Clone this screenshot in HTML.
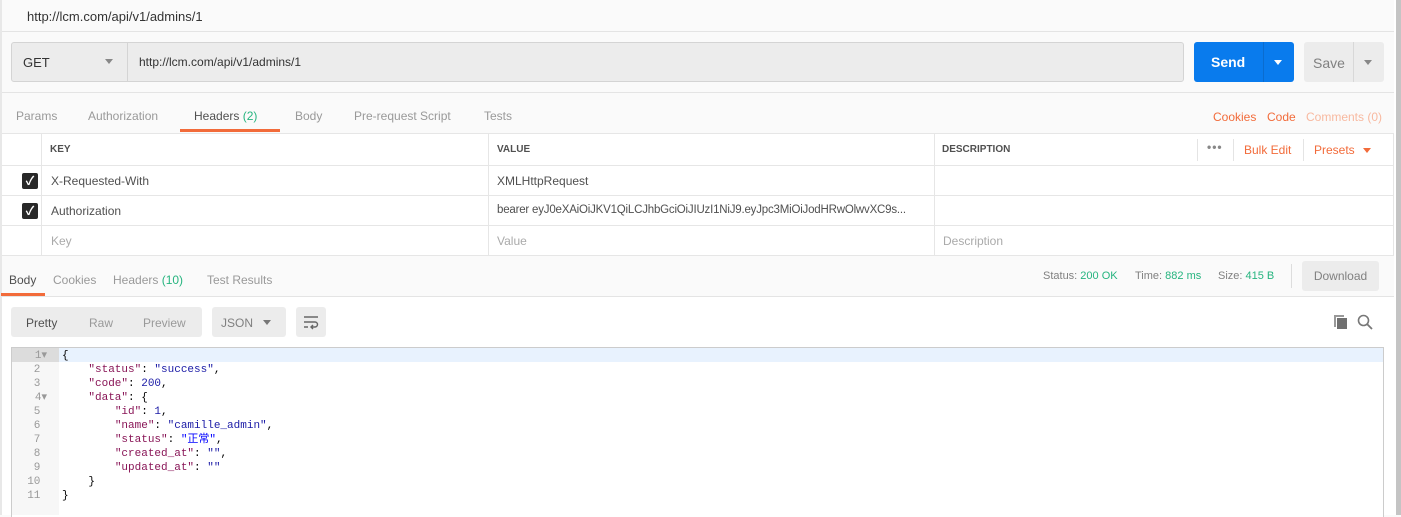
<!DOCTYPE html>
<html><head><meta charset="utf-8"><style>
*{box-sizing:border-box;margin:0;padding:0}
body{width:1401px;height:515px;overflow:hidden;background:#fafafa;font-family:"Liberation Sans","Noto Sans CJK SC",sans-serif;font-size:12px;color:#505050;position:relative}
.a{position:absolute}
.g{color:#999}
.o{color:#f26b3a}
.t{position:absolute;top:109px;font-size:12px;color:#999}
.cell{position:absolute;background:#fff;border:1px solid #e4e4e4}
.cb{position:absolute;left:22px;width:16px;height:16px;background:#282828;border-radius:2px;color:#fff;font-size:12px;line-height:16px;text-align:center;font-weight:bold}
.code{position:absolute;left:62px;font-family:"Liberation Mono","Noto Sans CJK SC",monospace;font-size:11px;line-height:14px;white-space:pre;color:#000}
.k{color:#881456}.s{color:#1a1aa6}.n{color:#1a1aa6}
.ln{position:absolute;left:11px;width:36px;text-align:right;font-family:"Liberation Mono",monospace;font-size:11px;line-height:14px;color:#999;white-space:pre}
</style></head><body>
<div class="a" style="left:0;top:0;width:2px;height:515px;background:#e8e8e8"></div>
<div class="a" style="left:27px;top:9px;font-size:13px;color:#333">http://lcm.com/api/v1/admins/1</div>
<div class="a" style="left:2px;top:31px;width:1392px;height:1px;background:#e4e4e4"></div>
<div class="a" style="left:11px;top:42px;width:1173px;height:40px;background:#ececec;border:1px solid #d4d4d4;border-radius:3px"></div>
<div class="a" style="left:127px;top:43px;width:1px;height:38px;background:#d4d4d4"></div>
<div class="a" style="left:23px;top:55px;font-size:13px;color:#333">GET</div>
<div class="a" style="left:105px;top:59px;border-left:4px solid transparent;border-right:4px solid transparent;border-top:5px solid #888"></div>
<div class="a" style="left:139px;top:55px;font-size:12px;color:#333">http://lcm.com/api/v1/admins/1</div>
<div class="a" style="left:1194px;top:42px;width:100px;height:40px;background:#097bed;border-radius:3px"></div>
<div class="a" style="left:1263px;top:42px;width:1px;height:40px;background:#0a6ccf"></div>
<div class="a" style="left:1211px;top:54px;font-size:14px;font-weight:bold;color:#fff">Send</div>
<div class="a" style="left:1274px;top:60px;border-left:4px solid transparent;border-right:4px solid transparent;border-top:5px solid #fff"></div>
<div class="a" style="left:1304px;top:42px;width:80px;height:40px;background:#ececec;border-radius:3px"></div>
<div class="a" style="left:1353px;top:42px;width:1px;height:40px;background:#d8d8d8"></div>
<div class="a" style="left:1313px;top:55px;font-size:14px;color:#808080">Save</div>
<div class="a" style="left:1364px;top:60px;border-left:4px solid transparent;border-right:4px solid transparent;border-top:5px solid #888"></div>
<div class="a" style="left:2px;top:92px;width:1392px;height:1px;background:#e4e4e4"></div>
<div class="t" style="left:16px">Params</div>
<div class="t" style="left:88px">Authorization</div>
<div class="t" style="left:194px;color:#505050">Headers <span style="color:#26b47f">(2)</span></div>
<div class="t" style="left:295px">Body</div>
<div class="t" style="left:354px">Pre-request Script</div>
<div class="t" style="left:484px">Tests</div>
<div class="a" style="left:180px;top:129px;width:100px;height:3px;background:#f26b3a"></div>
<div class="a o" style="left:1213px;top:110px">Cookies</div>
<div class="a o" style="left:1267px;top:110px">Code</div>
<div class="a" style="left:1306px;top:110px;color:#f8b9a0">Comments (0)</div>
<div class="cell" style="left:2px;top:133px;width:1392px;height:123px;border:none;background:#e6e6e6"></div>
<div class="cell" style="left:2px;top:134px;width:39px;height:31px;border:none"></div>
<div class="cell" style="left:42px;top:134px;width:446px;height:31px;border:none"></div>
<div class="cell" style="left:489px;top:134px;width:445px;height:31px;border:none"></div>
<div class="cell" style="left:935px;top:134px;width:458px;height:31px;border:none"></div>
<div class="cell" style="left:2px;top:166px;width:39px;height:29px;border:none"></div>
<div class="cell" style="left:42px;top:166px;width:446px;height:29px;border:none"></div>
<div class="cell" style="left:489px;top:166px;width:445px;height:29px;border:none"></div>
<div class="cell" style="left:935px;top:166px;width:458px;height:29px;border:none"></div>
<div class="cell" style="left:2px;top:196px;width:39px;height:29px;border:none"></div>
<div class="cell" style="left:42px;top:196px;width:446px;height:29px;border:none"></div>
<div class="cell" style="left:489px;top:196px;width:445px;height:29px;border:none"></div>
<div class="cell" style="left:935px;top:196px;width:458px;height:29px;border:none"></div>
<div class="cell" style="left:2px;top:226px;width:39px;height:29px;border:none"></div>
<div class="cell" style="left:42px;top:226px;width:446px;height:29px;border:none"></div>
<div class="cell" style="left:489px;top:226px;width:445px;height:29px;border:none"></div>
<div class="cell" style="left:935px;top:226px;width:458px;height:29px;border:none"></div>
<div class="a" style="left:50px;top:144px;font-size:10px;font-weight:bold;color:#505050">KEY</div>
<div class="a" style="left:497px;top:144px;font-size:10px;font-weight:bold;color:#505050">VALUE</div>
<div class="a" style="left:942px;top:144px;font-size:10px;font-weight:bold;color:#505050">DESCRIPTION</div>
<div class="a" style="left:1197px;top:139px;width:1px;height:22px;background:#e4e4e4"></div>
<div class="a" style="left:1207px;top:140px;color:#888;font-size:12px;font-weight:bold;letter-spacing:1px">•••</div>
<div class="a" style="left:1233px;top:139px;width:1px;height:22px;background:#e4e4e4"></div>
<div class="a o" style="left:1244px;top:143px">Bulk Edit</div>
<div class="a" style="left:1303px;top:139px;width:1px;height:22px;background:#e4e4e4"></div>
<div class="a o" style="left:1314px;top:143px">Presets</div>
<div class="a" style="left:1363px;top:148px;border-left:4px solid transparent;border-right:4px solid transparent;border-top:5px solid #f26b3a"></div>
<div class="cb" style="top:173px">✓</div>
<div class="cb" style="top:203px">✓</div>
<div class="a" style="left:51px;top:174px">X-Requested-With</div>
<div class="a" style="left:497px;top:174px">XMLHttpRequest</div>
<div class="a" style="left:51px;top:204px">Authorization</div>
<div class="a" style="left:497px;top:204px;font-size:11.5px;letter-spacing:-0.2px;width:430px;white-space:nowrap;overflow:hidden">bearer eyJ0eXAiOiJKV1QiLCJhbGciOiJIUzI1NiJ9.eyJpc3MiOiJodHRwOlwvXC9s...</div>
<div class="a g" style="left:51px;top:234px;color:#aaa">Key</div>
<div class="a g" style="left:497px;top:234px;color:#aaa">Value</div>
<div class="a g" style="left:943px;top:234px;color:#aaa">Description</div>
<div class="a" style="left:9px;top:273px;font-size:12px;color:#505050">Body</div>
<div class="a g" style="left:53px;top:273px">Cookies</div>
<div class="a g" style="left:113px;top:273px">Headers <span style="color:#26b47f">(10)</span></div>
<div class="a g" style="left:207px;top:273px">Test Results</div>
<div class="a" style="left:1px;top:293px;width:44px;height:3px;background:#f26b3a"></div>
<div class="a" style="left:1043px;top:270px;font-size:11px;color:#808080">Status: <span style="color:#26b47f">200 OK</span></div>
<div class="a" style="left:1135px;top:270px;font-size:11px;color:#808080">Time: <span style="color:#26b47f">882 ms</span></div>
<div class="a" style="left:1218px;top:270px;font-size:11px;color:#808080">Size: <span style="color:#26b47f">415 B</span></div>
<div class="a" style="left:1291px;top:264px;width:1px;height:24px;background:#ddd"></div>
<div class="a" style="left:1302px;top:261px;width:77px;height:30px;background:#ececec;border-radius:3px;color:#808080;text-align:center;line-height:30px;font-size:12px">Download</div>
<div class="a" style="left:2px;top:296px;width:1392px;height:219px;background:#fff;border-top:1px solid #e4e4e4"></div>
<div class="a" style="left:11px;top:307px;width:191px;height:30px;background:#ececec;border-radius:3px"></div>
<div class="a" style="left:26px;top:316px;color:#505050">Pretty</div>
<div class="a g" style="left:89px;top:316px">Raw</div>
<div class="a g" style="left:143px;top:316px">Preview</div>
<div class="a" style="left:212px;top:307px;width:74px;height:30px;background:#ececec;border-radius:3px"></div>
<div class="a" style="left:221px;top:316px;color:#808080">JSON</div>
<div class="a" style="left:263px;top:320px;border-left:4px solid transparent;border-right:4px solid transparent;border-top:5px solid #777"></div>
<div class="a" style="left:296px;top:307px;width:30px;height:30px;background:#ececec;border-radius:3px"></div>
<svg class="a" style="left:303px;top:314px" width="16" height="16" viewBox="0 0 16 16"><path d="M1 3h14M1 8h11a2.5 2.5 0 0 1 0 5H8M1 13h4M10 11l-2 2 2 2" stroke="#666" stroke-width="1.4" fill="none"/></svg>
<svg class="a" style="left:1332px;top:314px" width="16" height="16" viewBox="0 0 16 16"><path d="M2 1h10v2H4v10H2z" fill="#999"/><rect x="5" y="4" width="10" height="11" fill="#707070"/></svg>
<svg class="a" style="left:1357px;top:314px" width="16" height="16" viewBox="0 0 16 16"><circle cx="6.5" cy="6.5" r="5" stroke="#777" stroke-width="1.6" fill="none"/><path d="M10 10l5 5" stroke="#777" stroke-width="1.8"/></svg>
<div class="a" style="left:11px;top:347px;width:1373px;height:170px;border:1px solid #ccc;border-bottom:none;background:#fff"></div>
<div class="a" style="left:12px;top:348px;width:47px;height:167px;background:#f7f7f7"></div>
<div class="a" style="left:12px;top:348px;width:47px;height:14px;background:#dcdcdc"></div>
<div class="a" style="left:59px;top:348px;width:1324px;height:14px;background:#e8f2fe"></div>
<div class="ln" style="top:349px"> 1▾
 2 
 3 
 4▾
 5 
 6 
 7 
 8 
 9 
10 
11 </div>
<div class="code" style="top:349px">{
    <span class="k">"status"</span>: <span class="s">"success"</span>,
    <span class="k">"code"</span>: <span class="n">200</span>,
    <span class="k">"data"</span>: {
        <span class="k">"id"</span>: <span class="n">1</span>,
        <span class="k">"name"</span>: <span class="s">"camille_admin"</span>,
        <span class="k">"status"</span>: <span class="s" style="color:#00f">"正常"</span>,
        <span class="k">"created_at"</span>: <span class="s">""</span>,
        <span class="k">"updated_at"</span>: <span class="s">""</span>
    }
}</div>
<div class="a" style="left:1394px;top:0;width:2px;height:515px;background:#fff"></div>
<div class="a" style="left:1396px;top:0;width:5px;height:515px;background:#c4c4c4"></div>
</body></html>
